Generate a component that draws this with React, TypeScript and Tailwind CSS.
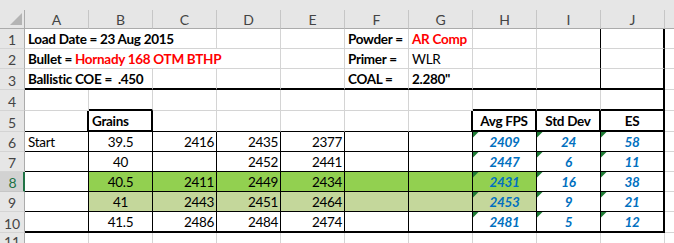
import { ReactNode } from "react";

type Edge = "g" | "k" | "K" | "n";

interface Cell {
  t?: ReactNode;
  span?: number;
  r: Edge;
  b: Edge;
  al?: "l" | "c" | "r";
  fill?: string;
  cls?: string;
  flag?: boolean;
}

const RIGHT: Record<Edge, string> = {
  g: "border-r border-r-[#d4d4d4]",
  k: "border-r border-r-black",
  K: "border-r-2 border-r-black",
  n: "",
};

const BOTTOM: Record<Edge, string> = {
  g: "border-b border-b-[#d4d4d4]",
  k: "border-b border-b-black",
  K: "border-b-2 border-b-black",
  n: "",
};

const ALIGN = {
  l: "justify-start pl-[3px]",
  c: "justify-center",
  r: "justify-end pr-[2px]",
};

const SPAN: Record<number, string> = {
  1: "",
  2: "col-span-2",
  3: "col-span-3",
  4: "col-span-4",
};

const bold = "font-bold";
const stat = "font-bold italic text-[#0070c0]";
const lime = "bg-[#92d050]";
const sage = "bg-[#c4d79b]";

const g = (extra: Partial<Cell> = {}): Cell => ({ r: "g", b: "g", ...extra });
const k = (extra: Partial<Cell> = {}): Cell => ({ r: "k", b: "k", ...extra });

// one row of load data: charge, three chrono strings, then the summary figures
const loadRow = (
  grains: string,
  shots: string[],
  avg: string,
  sd: string,
  es: string,
  fill: string | undefined,
  last: boolean
): Cell[] => {
  const b: Edge = last ? "K" : "k";
  return [
    k({ b, t: grains === "39.5" ? "Start" : undefined, al: "l" }),
    k({ b, t: grains, al: "c", fill }),
    k({ b, t: shots[0], al: "r", fill }),
    k({ b, t: shots[1], al: "r", fill }),
    k({ b, t: shots[2], al: "r", fill }),
    k({ b, fill }),
    k({ b, fill }),
    k({ b, t: avg, al: "c", cls: stat, fill, flag: true }),
    k({ b, t: sd, al: "c", cls: stat, flag: true }),
    { r: "K", b, t: es, al: "c", cls: stat, flag: true },
  ];
};

const rows: Cell[][] = [
  [
    g({ span: 3, t: "Load Date = 23 Aug 2015", al: "l", cls: bold }),
    g(),
    g(),
    g({ t: "Powder =", al: "l", cls: bold }),
    g({ t: "AR Comp", al: "l", cls: "font-bold text-[#ff0000]" }),
    g(),
    g({ r: "k" }),
    g({ r: "K" }),
  ],
  [
    g({
      span: 4,
      al: "l",
      cls: bold,
      t: (
        <>
          Bullet = <span className="text-[#ff0000]">Hornady 168 OTM BTHP</span>
        </>
      ),
    }),
    g(),
    g({ t: "Primer =", al: "l", cls: bold }),
    g({ t: "WLR", al: "l" }),
    g(),
    g({ r: "k" }),
    g({ r: "K" }),
  ],
  [
    g({ span: 2, b: "K", t: "Ballistic COE =  .450", al: "l", cls: bold }),
    g({ b: "K" }),
    g({ b: "K" }),
    g({ b: "K" }),
    g({ b: "K", t: "COAL =", al: "l", cls: bold }),
    g({ b: "K", t: "2.280\"", al: "l", cls: bold }),
    g({ b: "K" }),
    g({ r: "k", b: "K" }),
    g({ r: "K", b: "K" }),
  ],
  [
    g(),
    g({ b: "K" }),
    g(),
    g(),
    g(),
    g(),
    g(),
    g({ b: "K" }),
    g({ b: "K" }),
    g({ r: "K", b: "K" }),
  ],
  [
    { r: "K", b: "k" },
    { r: "K", b: "K", t: "Grains", al: "l", cls: bold },
    g({ b: "k" }),
    g({ b: "k" }),
    g({ b: "k" }),
    g({ b: "k" }),
    { r: "K", b: "k" },
    { r: "K", b: "K", t: "Avg FPS", al: "c", cls: bold },
    { r: "K", b: "K", t: "Std Dev", al: "c", cls: bold },
    { r: "K", b: "K", t: "ES", al: "c", cls: bold },
  ],
  loadRow("39.5", ["2416", "2435", "2377"], "2409", "24", "58", undefined, false),
  loadRow("40", ["", "2452", "2441"], "2447", "6", "11", undefined, false),
  loadRow("40.5", ["2411", "2449", "2434"], "2431", "16", "38", lime, false),
  loadRow("41", ["2443", "2451", "2464"], "2453", "9", "21", sage, false),
  loadRow("41.5", ["2486", "2484", "2474"], "2481", "5", "12", undefined, true),
  Array.from({ length: 10 }, () => g()),
];

const columns = ["A", "B", "C", "D", "E", "F", "G", "H", "I", "J"];

const Corner = () => (
  <div className="border-r border-r-[#ababab] border-b border-b-[#ababab] bg-[#e6e6e6]">
    <svg width="24" height="18" className="block">
      <polygon points="22,3 22,15 10,15" fill="#b4b4b4" />
    </svg>
  </div>
);

const RowHead = ({ n }: { n: number }) => {
  const active = n === 8;
  return (
    <div
      className={
        active
          ? "flex items-end justify-center border-r-2 border-r-[#217346] border-b border-b-[#c6c6c6] bg-[#d2d2d2] pl-[2px] text-[14px] leading-[17px] tracking-normal text-[#217346]"
          : "flex items-end justify-center border-r border-r-[#ababab] border-b border-b-[#d4d4d4] bg-[#e6e6e6] text-[14px] leading-[17px] tracking-normal text-[#444]"
      }
    >
      {n <= 11 ? n : null}
    </div>
  );
};

const SheetCell = ({ c }: { c: Cell }) => (
  <div
    className={`relative flex items-end overflow-visible whitespace-pre leading-[17px] ${RIGHT[c.r]} ${BOTTOM[c.b]} ${SPAN[c.span ?? 1]} ${ALIGN[c.al ?? "l"]} ${c.fill ?? ""} ${c.cls ?? ""}`}
  >
    {c.flag && (
      <svg width="6" height="6" className="absolute left-0 top-0">
        <polygon points="0,0 5.5,0 0,5.5" fill="#1e7b34" />
      </svg>
    )}
    {c.t}
  </div>
);

export default function App() {
  return (
    <div className="h-[243px] w-[674px] overflow-hidden bg-white font-['Lato',sans-serif] text-[13.5px] tracking-[-0.3px] text-black">
      <div className="grid h-full grid-cols-[25px_repeat(10,64px)_1fr] grid-rows-[10px_19px_20px_20px_21px_21px_21px_20px_20px_20px_20px_21px_1fr]">
        <div className="col-span-12 bg-[#e6e6e6]" />
        <Corner />
        {columns.map((l) => (
          <div
            key={l}
            className="flex items-end justify-center border-r border-r-[#c6c6c6] border-b border-b-[#ababab] bg-[#e6e6e6] text-[14px] leading-[17px] tracking-normal text-[#444]"
          >
            {l}
          </div>
        ))}
        <div className="border-b border-b-[#ababab] bg-[#e6e6e6]" />
        {rows.map((row, i) => (
          <div key={i} className="contents">
            <RowHead n={i + 1} />
            {row.map((c, j) => (
              <SheetCell key={j} c={c} />
            ))}
            <div className="border-b border-b-[#d4d4d4]" />
          </div>
        ))}
      </div>
    </div>
  );
}
